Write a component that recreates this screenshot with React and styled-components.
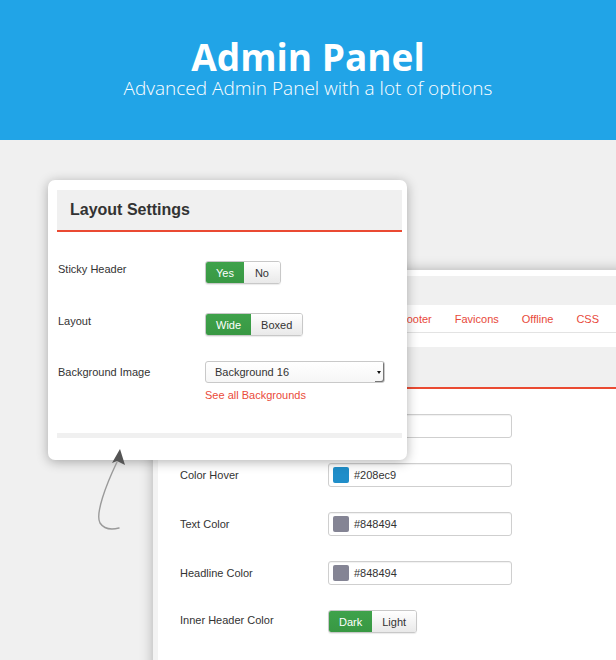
import styled, { createGlobalStyle } from "styled-components";

const GlobalStyle = createGlobalStyle`
  body {
    margin: 0;
    background: #f0f0f0;
    font-family: "Liberation Sans", Arial, sans-serif;
  }
`;

const tabs = ["Footer", "Favicons", "Offline", "CSS"];

const colorFields = [
  { label: "Main Color", value: "#e84c3d" },
  { label: "Color Hover", value: "#208ec9" },
  { label: "Text Color", value: "#848494" },
  { label: "Headline Color", value: "#848494" },
];

export default function App() {
  return (
    <>
      <GlobalStyle />
      <Banner>
        <Title>Admin Panel</Title>
        <Subtitle>Advanced Admin Panel with a lot of options</Subtitle>
      </Banner>

      <Stage>
        <AdminWindow>
          <WindowBar />
          <TabNav>
            {tabs.map((t) => (
              <TabLink key={t}>{t}</TabLink>
            ))}
          </TabNav>
          <SectionHead />
          <ColorForm>
            {colorFields.map((f) => (
              <FieldRow key={f.label}>
                <FieldLabel $pad={4}>{f.label}</FieldLabel>
                <ColorInput>
                  <Swatch $color={f.value} />
                  {f.value}
                </ColorInput>
              </FieldRow>
            ))}
            <FieldRow>
              <FieldLabel $pad={2}>Inner Header Color</FieldLabel>
              <Toggle>
                <ToggleButton $active>Dark</ToggleButton>
                <ToggleButton>Light</ToggleButton>
              </Toggle>
            </FieldRow>
          </ColorForm>
        </AdminWindow>

        <SettingsCard>
          <CardHead>Layout Settings</CardHead>
          <CardBody>
            <SettingRow $h={52}>
              <FieldLabel $w={147}>Sticky Header</FieldLabel>
              <Toggle>
                <ToggleButton $active>Yes</ToggleButton>
                <ToggleButton>No</ToggleButton>
              </Toggle>
            </SettingRow>
            <SettingRow $h={48}>
              <FieldLabel $w={147}>Layout</FieldLabel>
              <Toggle>
                <ToggleButton $active>Wide</ToggleButton>
                <ToggleButton>Boxed</ToggleButton>
              </Toggle>
            </SettingRow>
            <SettingRow>
              <FieldLabel $w={147} $pad={3}>
                Background Image
              </FieldLabel>
              <div>
                <Select>
                  Background 16
                  <SelectArrow />
                </Select>
                <RedLink>See all Backgrounds</RedLink>
              </div>
            </SettingRow>
          </CardBody>
          <CardFoot />
        </SettingsCard>

        <Pointer width="40" height="95" viewBox="0 0 40 95">
          <path
            d="M27 22 C16 45, 5 74, 10 83 C14 89, 21 90, 29 88"
            fill="none"
            stroke="#9a9a9a"
            strokeWidth="1.4"
            strokeLinecap="round"
          />
          <path d="M30 9 L22 23 L27 21 L35 25 Z" fill="#555" />
        </Pointer>
      </Stage>
    </>
  );
}

const Banner = styled.header`
  height: 140px;
  box-sizing: border-box;
  padding-top: 35px;
  background: #21a4e7;
  color: #fff;
  text-align: center;
  font-family: "Open Sans", sans-serif;
`;

const Title = styled.h1`
  margin: 0;
  font-size: 37px;
  line-height: 44px;
  font-weight: 700;
`;

const Subtitle = styled.p`
  margin: 0;
  font-size: 19px;
  line-height: 18px;
  font-weight: 300;
`;

const Stage = styled.main`
  position: relative;
  height: 520px;
  overflow: hidden;
  background: #f0f0f0;
`;

/* the admin window sits behind the card like a second screen */
const AdminWindow = styled.section`
  position: absolute;
  left: 153px;
  top: 130px;
  width: 480px;
  height: 420px;
  box-sizing: border-box;
  padding-top: 6px;
  background: #fff;
  border-left: 5px solid #f3f3f3;
  box-shadow: 0 0 12px rgba(0, 0, 0, 0.28);
  overflow: hidden;
`;

const WindowBar = styled.div`
  height: 29px;
  background: #f0f0f0;
`;

const TabNav = styled.nav`
  display: flex;
  justify-content: flex-end;
  align-items: center;
  gap: 23px;
  height: 27px;
  padding-right: 34px;
  border-bottom: 1px solid #e3e3e3;
  margin-bottom: 14px;
`;

const TabLink = styled.a`
  flex-shrink: 0;
  font-size: 11px;
  color: #e8493a;
`;

const SectionHead = styled.div`
  height: 40px;
  background: #f0f0f0;
  border-bottom: 2px solid #ea4a32;
`;

const ColorForm = styled.div`
  display: flex;
  flex-direction: column;
  gap: 25px;
  padding: 25px 0 0 22px;
`;

const FieldRow = styled.div`
  display: flex;
  align-items: flex-start;
`;

const FieldLabel = styled.span`
  width: ${(p) => p.$w || 148}px;
  flex-shrink: 0;
  padding-top: ${(p) => p.$pad || 0}px;
  font-size: 11px;
  line-height: 16px;
  color: #333;
`;

const ColorInput = styled.div`
  display: flex;
  align-items: center;
  gap: 5px;
  width: 184px;
  height: 24px;
  box-sizing: border-box;
  padding-left: 4px;
  border: 1px solid #cfcfcf;
  border-radius: 3px;
  box-shadow: inset 0 1px 1px rgba(0, 0, 0, 0.06);
  font-size: 11px;
  color: #333;
`;

const Swatch = styled.span`
  width: 16px;
  height: 16px;
  border-radius: 2px;
  background: ${(p) => p.$color};
`;

const Toggle = styled.div`
  display: flex;
  height: 23px;
  border-radius: 3px;
  overflow: hidden;
  border: 1px solid #c8c8c8;
  box-sizing: border-box;
  box-shadow: 0 1px 1px rgba(0, 0, 0, 0.08);
`;

const ToggleButton = styled.span`
  display: flex;
  align-items: center;
  justify-content: center;
  min-width: 36px;
  padding: 0 10px;
  box-sizing: border-box;
  font-size: 11px;
  color: ${(p) => (p.$active ? "#fff" : "#333")};
  background: ${(p) =>
    p.$active
      ? "linear-gradient(#3fa24b, #389843)"
      : "linear-gradient(#ffffff, #e9e9e9)"};
`;

const SettingsCard = styled.section`
  position: absolute;
  left: 48px;
  top: 40px;
  width: 359px;
  height: 280px;
  box-sizing: border-box;
  padding: 10px 5px 0 9px;
  background: #fff;
  border-radius: 7px;
  box-shadow: 0 2px 12px rgba(0, 0, 0, 0.3);
`;

const CardHead = styled.h2`
  margin: 0;
  height: 40px;
  padding-left: 13px;
  display: flex;
  align-items: center;
  background: #f0f0f0;
  border-bottom: 2px solid #ea4a32;
  font-size: 16px;
  font-weight: 700;
  color: #333;
`;

const CardBody = styled.div`
  height: 201px;
  padding: 29px 0 0 1px;
  box-sizing: border-box;
`;

const SettingRow = styled.div`
  display: flex;
  align-items: flex-start;
  height: ${(p) => (p.$h ? `${p.$h}px` : "auto")};
`;

const Select = styled.div`
  position: relative;
  width: 180px;
  height: 22px;
  box-sizing: border-box;
  padding-left: 9px;
  display: flex;
  align-items: center;
  border: 1px solid #c9c9c9;
  border-radius: 3px;
  background: linear-gradient(#ffffff, #f6f6f6);
  font-size: 11px;
  color: #333;
`;

const SelectArrow = styled.span`
  position: absolute;
  right: 0;
  top: 0;
  bottom: 0;
  width: 9px;
  border-radius: 0 2px 2px 0;
  box-shadow: inset -1px -1px 0 #777;
  &::after {
    content: "";
    position: absolute;
    left: 2px;
    top: 9px;
    border: 2px solid transparent;
    border-top: 3px solid #111;
  }
`;

const RedLink = styled.a`
  display: block;
  margin-top: 5px;
  font-size: 11px;
  line-height: 14px;
  color: #ea4a3a;
`;

const CardFoot = styled.div`
  height: 5px;
  background: #f0f0f0;
`;

const Pointer = styled.svg`
  position: absolute;
  left: 90px;
  top: 300px;
`;
